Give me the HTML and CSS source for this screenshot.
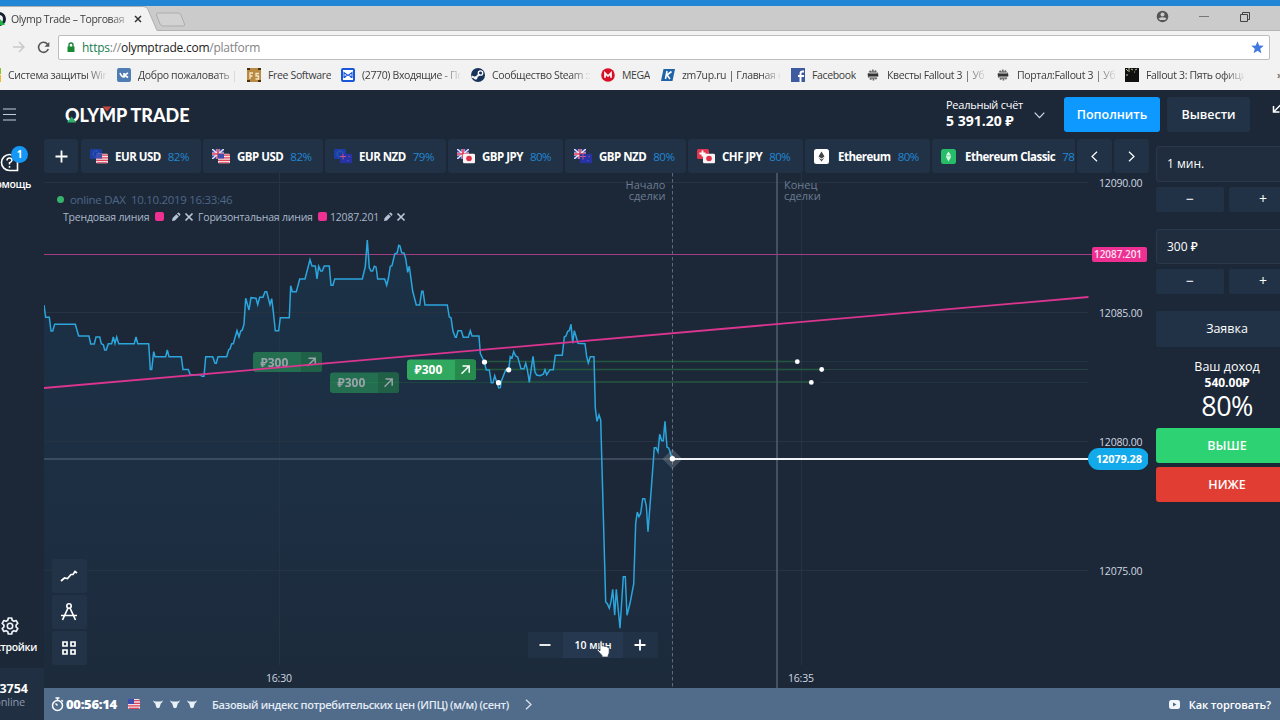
FILE: index.html
```html
<!DOCTYPE html>
<html lang="ru">
<head>
  <meta charset="UTF-8" />
  <meta name="viewport" content="width=device-width, initial-scale=1" />
  <title>Olymp Trade – Торговая платформа</title>
  <link rel="stylesheet" href="styles.css">
</head>
<body>
  <!-- icons used more than once -->
  <svg class="defs">
    <symbol id="eu" viewBox="0 0 12 10"><rect width="12" height="10" rx="1.5" fill="#1c3fa6"/><circle cx="6" cy="5" r="3" fill="none" stroke="#4a78b8" stroke-dasharray="1 1"/></symbol>
    <symbol id="us" viewBox="0 0 12 10"><rect width="12" height="10" rx="1.5" fill="#f3dfe4"/><path d="M0 1.7h12M0 4.3h12M0 6.9h12M1 9.4h10" stroke="#dc4459" stroke-width="1.2"/><path d="M0 0h6v5H0z" fill="#3f4fae"/></symbol>
    <symbol id="gb" viewBox="0 0 12 10"><rect width="12" height="10" rx="1.5" fill="#2c3c9c"/><path d="M0 0l12 10M12 0L0 10" stroke="#e8dfee" stroke-width="1.5"/><path d="M6 0v10M0 5h12" stroke="#f3e6ee" stroke-width="3"/><path d="M6 0v10M0 5h12" stroke="#dd3c5c" stroke-width="1.7"/></symbol>
    <symbol id="nz" viewBox="0 0 12 10"><rect width="12" height="10" rx="1.5" fill="#2732a4"/><path d="M0 3h6M3 0v6" stroke="#c0558c"/><circle cx="9" cy="3" r=".8" fill="#8b4aa0"/><circle cx="8" cy="7" r=".8" fill="#5a4fc0"/></symbol>
    <symbol id="jp" viewBox="0 0 12 10"><rect width="12" height="10" rx="1.5" fill="#fbf4f5"/><circle cx="6" cy="5" r="2.8" fill="#e02f49"/></symbol>
    <symbol id="ch" viewBox="0 0 12 10"><rect width="12" height="10" rx="1.5" fill="#e0364f"/><path d="M5.500 1.500v6M2.500 4.500h6" stroke="#fff" stroke-width="1.800"/></symbol>
    <symbol id="pen" viewBox="0 0 10 10"><path d="M1 9l.6-3L5.4 2.200l2.400 2.400L4 8.400z M6.100 1.500l.7-.7q.6-.5 1.200 0l1.200 1.200q.5.600 0 1.200l-.7.700z" fill="#b4c3d6"/></symbol>
    <symbol id="cross" viewBox="0 0 10 10"><path d="M1.500 1.500l7 7M8.500 1.500l-7 7" stroke="#b9c6d8" stroke-width="1.700"/></symbol>
    <symbol id="bull" viewBox="0 0 10 10"><path d="M.3 1q.5 1.500 2.500 1.500h4.400Q9.200 2.500 9.700 1q.3 2.800-1.900 3.500L6.600 8.500 5 9.300 3.400 8.500 2.200 4.500Q0 3.800.3 1z" fill="#e9f0f8"/></symbol>
    <symbol id="gearmark" viewBox="0 0 14 14"><circle cx="7" cy="7" r="4.800" fill="#777"/><circle cx="7" cy="7" r="5.300" fill="none" stroke="#666" stroke-width="2" stroke-dasharray="2 1.300"/><path d="M1 7h12" stroke="#333" stroke-width="2.500"/><path d="M3 4.500h8M3 9.500h8" stroke="#bbb"/></symbol>
  </svg>

  <div class="browser">
    <div class="tabstrip">
      <div class="tab">
        <svg class="tab-shape" width="162" height="25"><path d="M0 .5H143q4 0 5 3L157 24.500H162V25H0z" fill="#f2f2f2"/><path d="M0 .5H143q4 0 5 3L157 24.500H162" fill="none" stroke="#aeaeae"/></svg>
        <svg class="favicon" width="10" height="16"><circle cx="-1" cy="8" r="5.500" fill="none" stroke="#14202e" stroke-width="3"/><path d="M-6 14L0 8l5 6z" fill="#1eb445"/></svg>
        <span class="tab-title">Olymp Trade – Торговая</span>
        <svg class="tab-close" width="8" height="8"><path d="M1 1l6 6M7 1L1 7" stroke="#333" stroke-width="1.500"/></svg>
      </div>
      <svg class="newtab" width="32" height="16"><path d="M3 1H23q2 0 3 2l3.500 9q1 2-1.500 2H8q-2 0-3-2L1.500 3Q1 1 3 1z" fill="#d2d2d2" stroke="#adadad"/></svg>
      <div class="winbuttons">
        <svg width="13" height="13" viewBox="0 0 13 13"><circle cx="6.500" cy="6.500" r="5.800" fill="#555"/><circle cx="6.500" cy="4.500" r="2" fill="#ccc"/><path d="M2.500 8.500q4-2.500 8 0l-1.500 1.500h-5z" fill="#ccc"/></svg>
        <svg width="10" height="13"><path d="M0 6.500h10" stroke="#777"/></svg>
        <svg width="11" height="13"><path d="M1.500 4.500h7v7h-7zM3.500 4V2.500h7v7H9" fill="none" stroke="#444"/></svg>
      </div>
    </div>
    <div class="addressbar">
      <svg width="12" height="12"><path d="M0 6h11M6 1l5 5-5 5" fill="none" stroke="#c9c9c9" stroke-width="1.500"/></svg>
      <svg class="reload" width="13" height="13"><path d="M10.500 3.200A5 5 0 1 0 11.300 8" fill="none" stroke="#555" stroke-width="1.600"/><path d="M12.300 1v4.800H7.500z" fill="#555"/></svg>
      <div class="omnibox">
        <svg width="8" height="11"><path d="M2 5V3q0-2 2-2t2 2v2" fill="none" stroke="#188038" stroke-width="1.400"/><path d="M.5 4.500h7V10h-7z" fill="#188a32"/></svg>
        <span class="url"><i>https</i><s>://</s>olymptrade.com<s>/platform</s></span>
        <svg class="star" width="13" height="13" viewBox="0 0 13 13"><path d="M6.500 .3l1.700 4.200 4.500.3-3.500 2.900 1.200 4.500-3.900-2.500-3.900 2.500 1.200-4.500L.3 4.800l4.500-.3z" fill="#3f78e0"/></svg>
      </div>
    </div>
    <div class="bookmarks">
      <div class="bm bm1"><svg width="14" height="14"><path d="M0 0h6v6H0zM8 0h6v6H8z" fill="#8cc21e"/><path d="M0 7h14v7H0z" fill="#f5b91c"/></svg><span class="fade">Система защиты Wind</span></div>
      <div class="bm bm2"><svg width="14" height="14"><rect width="14" height="14" rx="2" fill="#4f7db3"/><path d="M3 5q1.500 4 4 4V5M11 5L7.500 7 11 9.500" fill="none" stroke="#fff" stroke-width="1.600"/></svg><span class="fade">Добро пожаловать |</span></div>
      <div class="bm bm3"><svg width="14" height="14"><rect width="14" height="14" fill="#b98a44"/><path d="M3 11V5h3M3 8h2.500M12 5.500H9V8h2.500v3H8.500" fill="none" stroke="#f5e6c4" stroke-width="1.300"/><path d="M0 0h3v2H0zM11 0h3v2h-3zM0 12h3v2H0zM11 12h3v2h-3z" fill="#47330f"/></svg><span>Free Software</span></div>
      <div class="bm bm4"><svg width="14" height="14"><rect x="1" y="1" width="12" height="12" rx="1" fill="#fff" stroke="#1a56d8" stroke-width="2"/><path d="M3 10V4.500l4 3 4-3V10M3.500 9.500L5.500 7.500M10.500 9.500L8.500 7.500" fill="none" stroke="#1a56d8" stroke-width="1.100"/></svg><span class="fade">(2770) Входящие - Поч</span></div>
      <div class="bm bm5"><svg width="14" height="14"><circle cx="7" cy="7" r="7" fill="#16335c"/><path d="M.5 8.500l4 1.500 4-4" fill="none" stroke="#eee" stroke-width="2"/><circle cx="9.500" cy="5" r="2.200" fill="none" stroke="#fff" stroke-width="1.300"/><circle cx="4.800" cy="10" r="1.600" fill="#fff"/></svg><span class="fade">Сообщество Steam ::</span></div>
      <div class="bm bm6"><svg width="14" height="14"><circle cx="7" cy="7" r="6.800" fill="#d90f26"/><path d="M4 9.800V5l3 3 3-3v4.800" fill="none" stroke="#fff" stroke-width="1.700"/></svg><span>MEGA</span></div>
      <div class="bm bm7"><svg width="14" height="14"><path d="M2.500 1H14l-2.500 12H0z" fill="#1e62a8"/><path d="M6 3L4.500 11M10.500 3.500L6 7l3 4" fill="none" stroke="#fff" stroke-width="1.600"/></svg><span class="fade">zm7up.ru | Главная ст</span></div>
      <div class="bm bm8"><svg width="14" height="14"><rect width="14" height="14" fill="#3f5ba0"/><path d="M9.500 14V5.500q0-2 2-2H13M7 8h6" fill="none" stroke="#fff" stroke-width="1.900"/></svg><span>Facebook</span></div>
      <div class="bm bm9"><svg width="12" height="12"><use href="#gearmark"/></svg><span class="fade">Квесты Fallout 3 | Убеж</span></div>
      <div class="bm bm10"><svg width="12" height="12"><use href="#gearmark"/></svg><span class="fade">Портал:Fallout 3 | Убеж</span></div>
      <div class="bm bm11"><svg width="14" height="14"><path d="M0 0h14v14H0z" fill="#111"/><path d="M1 1l2 2M4 0v4M2 6v2M6 1l2 1M10 2l2-1M9 4h1" stroke="#bfc3a0"/></svg><span class="fade">Fallout 3: Пять официал</span></div>
      <span class="more">»</span>
    </div>
  </div>

  <div class="app">
    <div class="sidebar">
      <svg class="burger" width="14" height="13"><path d="M0 1h13M0 6.500h13M0 12h13" stroke="#c3ccd8" stroke-width="1.200"/></svg>
      <div class="help">
        <svg width="20" height="20"><path d="M9.500 1.500a8 8 0 1 0 0 16H17.500V9.500a8 8 0 0 0-8-8z" fill="none" stroke="#fff" stroke-width="1.600"/><path d="M7 7.500q0-2.500 2.500-2.500T12 7.300q0 1.500-2.500 2.500v1.700M9.500 13v1.700" fill="none" stroke="#fff" stroke-width="1.500"/></svg>
        <span class="badge">1</span>
      </div>
      <span class="side-label help-label">Помощь</span>
      <svg class="gear" width="18" height="18" viewBox="0 0 18 18"><path d="M7.300 1h3.400l.5 2.300 1.700 1 2.200-.8 1.700 2.900L15.100 8v2l1.700 1.600-1.700 2.900-2.200-.8-1.700 1-.5 2.300H7.300l-.5-2.300-1.700-1-2.200.8-1.700-2.900L2.900 10V8L1.200 6.400l1.700-2.900 2.200.8 1.700-1z" fill="none" stroke="#eef2f7" stroke-width="1.700" stroke-linejoin="round"/><circle cx="9" cy="9" r="2.700" fill="none" stroke="#eef2f7" stroke-width="1.600"/></svg>
      <span class="side-label">Настройки</span>
      <div class="online"><b>13754</b><span>online</span></div>
    </div>

    <div class="main">
      <div class="header">
        <svg class="logo" width="128" height="20">
          <text x="0" y="16.500" textLength="124.500" lengthAdjust="spacingAndGlyphs">OLYMP TRADE</text>
          <path d="M2 17.500l4.700-6 4.700 6z" fill="#2fae6c"/>
          <path d="M37.500 1.500h9l-4.500 5z" fill="#c8473f"/>
        </svg>
        <div class="account">
          <span>Реальный счёт</span>
          <b>5 391.20 ₽</b>
        </div>
        <svg class="chev" width="11" height="7"><path d="M.7 .7l4.800 5 4.800-5" fill="none" stroke="#d5dce5" stroke-width="1.200"/></svg>
        <button class="deposit">Пополнить</button>
        <button class="withdraw">Вывести</button>
        <svg class="expand" width="14" height="12"><path d="M1.500 4v6h6M2 9.500L10 1.500" fill="none" stroke="#fff" stroke-width="1.500"/></svg>
      </div>

      <div class="workspace">
        <div class="trading">
          <div class="pairs">
            <div class="add"><svg width="13" height="13"><path d="M6.500 .5v12M.5 6.500h12" stroke="#fff" stroke-width="1.800"/></svg></div>
            <div class="pair w120"><svg class="flags"><use href="#eu" width="12" height="10"/><use href="#us" x="6" y="4.500" width="12" height="10"/></svg><b>EUR USD</b><i>82%</i></div>
            <div class="pair w120"><svg class="flags"><use href="#gb" width="12" height="10"/><use href="#us" x="6" y="4.500" width="12" height="10"/></svg><b>GBP USD</b><i>82%</i></div>
            <div class="pair w121"><svg class="flags"><use href="#eu" width="12" height="10"/><use href="#nz" x="6" y="4.500" width="12" height="10"/></svg><b>EUR NZD</b><i>79%</i></div>
            <div class="pair w115"><svg class="flags"><use href="#gb" width="12" height="10"/><use href="#jp" x="6" y="4.500" width="12" height="10"/></svg><b>GBP JPY</b><i>80%</i></div>
            <div class="pair w121"><svg class="flags"><use href="#gb" width="12" height="10"/><use href="#nz" x="6" y="4.500" width="12" height="10"/></svg><b>GBP NZD</b><i>80%</i></div>
            <div class="pair w115"><svg class="flags"><use href="#ch" width="12" height="10"/><use href="#jp" x="6" y="4.500" width="12" height="10"/></svg><b>CHF JPY</b><i>80%</i></div>
            <div class="pair w125"><svg class="coin" width="15" height="15"><rect width="15" height="15" rx="2.500" fill="#fff"/><path d="M7.500 2.500l3 5-3 2-3-2zM4.700 8.800l2.800 1.700 2.800-1.700-2.800 3.700z" fill="#444"/></svg><b>Ethereum</b><i>80%</i></div>
            <div class="pair last"><svg class="coin" width="15" height="15"><rect width="15" height="15" rx="2.500" fill="#27bd68"/><path d="M7.500 2.500L10 6.500H5zM5 8h5l-2.500 4.500z" fill="#d8f7e4"/><path d="M5 7.300h5" stroke="#d8f7e4"/></svg><b>Ethereum Classic</b><i>78%</i></div>
            <div class="arrow"><svg width="7" height="11"><path d="M6 .7L1 5.500l5 4.800" fill="none" stroke="#fff" stroke-width="1.200"/></svg></div>
            <div class="arrow"><svg width="7" height="11"><path d="M1 .7l5 4.800-5 4.800" fill="none" stroke="#fff" stroke-width="1.200"/></svg></div>
          </div>

          <div class="chart">
            <!-- viewBox keeps window coordinates -->
            <svg class="plot" viewBox="44 173 1104 515" width="1104" height="515">
              <defs>
                <linearGradient id="area" x1="0" y1="240" x2="0" y2="688" gradientUnits="userSpaceOnUse">
                  <stop offset="0" stop-color="#1b3146"/>
                  <stop offset=".65" stop-color="#1d2e42"/>
                  <stop offset="1" stop-color="#1c2a3a"/>
                </linearGradient>
                <path id="price" d="M44 305L45.700 317.300H49.300L51 331H52.700L54.700 324.300H75.300L78.700 336H89L90.700 344H94.300L96 337H99.700L101.300 343.700 103.300 344.700 104.700 350H106.300L108.300 343.700H111.700L113.300 337 115 343.500 116.700 337 118.700 343.700H134.300L136 337 137.700 343.700H148.700L150.300 369.500H151.700L153.700 351.700 155 356.700H165.700L167.300 350 169 356.700H181.300L183 369.500H188.300L190.300 374.700H200L202 376.300H204L205.700 356.700H212.700L215 363.300H216.300L218 356.700H226.700L228.700 349.700 230 349 231.700 343.700H233.300L237 330.700 239 337 240.700 331 242.300 330 244 324.300 245.700 298.300 249 310 251 297.700 256 298.300 257.700 304.700 259.700 297.300H263L265 291.700H266.700L270 304.700 271.700 298.700 273.300 311.700 275.300 330.700H278.700L280.300 317.700H289.300L290.700 285.700 292.300 291.700H296.300L299.700 279H305L310 259.700 312 266H315.300L317 279 318.700 266.300 320.700 271H322.300L324.300 266H329.300L331 285.300H333L334.700 279H362.300L365.300 266.700 367.300 240 369.300 267.700 371 271H372.700L374.300 266.300 376 267 377.700 279H384.700L386.700 285.300 388.300 279 390.300 266.300 392 265.700 394.700 254 397.300 252.700 398.700 245.300 400 246 401.700 252.700 404 253 405.700 258.700 407.700 272.300 409.300 266.300 412.700 291.300 416.300 305H419.700L421.700 291.300H423L425 305H447.300L449.300 317 451 317.700 453 331.300 455.300 337.300H456.300L458 330.700H461.300L463.300 337.300H468.300L470.300 330.700 472 336H479L480.300 353.300 484.300 362 486.300 370H489.300L491.300 382.700H493L494.700 375.700 498.700 388 500.300 387.700 501.300 381.300 503.700 375 505.700 370 508.700 369.700 510.300 356.700 512 358 513.700 351.700 515.700 356 517.700 357 521 368.700H524L525.700 363.300 527.300 369.300 529.300 382.300 533 356.300 535 372 536.700 375 540 375.700 543.300 374.300 545 369.700 546.700 374.700 550 369.700H553.300L555.300 355.300H562.300L564.300 337 566 336 567.700 331.300 569.300 330.700 571 324.300 572.700 343.300 574.300 330.700 576 336.300 578 343.300 585 343.700 586.700 356.700 588.300 363 590.300 356.700H594L595.300 408 597 421.300 599 415 600.700 420 605.700 602 607.300 603.700 609.300 608.300 611 601.700 612.700 589.300 614.700 615.300 616.300 589.300 620 628.300 623.300 576.700H625.300L627 615.300 630 603.300 633.700 584 635.700 523.300 637.300 512 639 516.700 640.700 513.300 642.700 498.700H644.700L646.300 506 648 531.700 651.700 483.300 654.300 447.700H656L658 452 659.700 434.300 661.700 440.700H663.300L665 421.300 667 447.300 668.700 448 672.300 458.700"/>
              </defs>
              <path d="M44 305L45.700 317.300H49.300L51 331H52.700L54.700 324.300H75.300L78.700 336H89L90.700 344H148.700L150.300 369.500 153.700 356.700H181.300L183 369.500H188.300L190.300 374.700 204 376.300 205.700 356.700H226.700L244 324.300 245.700 298.300H256L266.700 291.700 273.300 311.700 275.300 330.700H278.700L280.300 317.700H289.300L290.700 285.700 296.300 291.700 299.700 279H305L310 259.700 312 266H329.300L331 285.300 334.700 279H362.300L367.300 240 369.300 267.700 377.700 279H386.700L394.700 254 398.700 245.300 405.700 258.700 416.300 305H447.300L455.300 337.300 479 336 480.300 353.300 491.300 382.700 498.700 388 513.700 351.700 521 368.700 529.300 382.300 533 356.300 540 375.700 553.300 369.300 555.300 355.300H562.300L564.300 337 571 324.300 578 343.300H585L588.300 363 594 356.700 595.300 408 600.700 420 605.700 602 611 601.700 620 628.300 623.300 576.700 627 615.300 633.700 584 635.700 523.300 642.700 498.700 648 531.700 654.300 447.700 659.700 434.300 665 421.300 667 447.300 672.300 458.700V688H44z" fill="url(#area)"/>
              <path class="grid" d="M44 182.500H1088M44 312.500H1088M44 441.500H1088M44 570.500H1088M279.500 173V665M801.500 173V665"/>
              <path d="M820 382.500H1088M800 361.500H1088" stroke="#22343f"/>
              <path d="M822 369.500H1088" stroke="#24443f"/>
              <path d="M330 382.500H498" stroke="#1e4640"/>
              <path d="M484 361.500H797M476 369.500H822M498 382H811" stroke="#23583f" stroke-width="1.400"/>
              <path d="M44 459H672" stroke="#46566a" stroke-width="1.500"/>
              <path d="M672.500 173V688" stroke="#5d6979" stroke-dasharray="3.500 2.500"/>
              <path d="M777 173V688" stroke="#4f5b6d" stroke-width="1.600"/>
              <path d="M44 254.500H1092" stroke="#a33c82" stroke-width="1.200"/>
              <use href="#price" fill="none" stroke="#2ba5dc" stroke-width="1.500"/>
              <g class="deal" opacity=".55"><rect x="253" y="352" width="69" height="20" rx="3" fill="#2aa35a"/><path d="M301 352h18q3 0 3 3v14q0 3-3 3h-18z" fill="#23884b"/><text x="260.500" y="366.500">₽300</text><path d="M307.500 366l7.500-7.500M308.500 358.200h6.700v6.700" /></g>
              <g class="deal" opacity=".55"><rect x="330" y="372.500" width="69" height="20.500" rx="3" fill="#2aa35a"/><path d="M378 372.500h18q3 0 3 3v14.500q0 3-3 3h-18z" fill="#23884b"/><text x="337.500" y="387.300">₽300</text><path d="M384.500 386.800l7.500-7.500M385.500 379h6.700v6.700"/></g>
              <path d="M44 388L1088.500 297" stroke="#db3590" stroke-width="1.800"/>
              <g class="deal"><rect x="407" y="359.500" width="69" height="20.500" rx="3" fill="#30a860"/><path d="M455 359.500h18q3 0 3 3v14.500q0 3-3 3h-18z" fill="#268a4c"/><text x="414.500" y="374.300">₽300</text><path d="M461.500 373.800l7.500-7.500M462.500 366h6.700v6.700"/></g>
              <g fill="#fff"><circle cx="484.500" cy="362" r="2.600"/><circle cx="508.700" cy="369.800" r="2.600"/><circle cx="498.500" cy="382.700" r="2.600"/><circle cx="797.300" cy="361.700" r="2.400"/><circle cx="821.700" cy="369.500" r="2.400"/><circle cx="811.300" cy="382.400" r="2.400"/></g>
              <path d="M662.500 459l10-10 10 10-10 10z" fill="#fff" fill-opacity=".16"/>
              <path d="M672 459H1090" stroke="#f0f3f6" stroke-width="1.800"/>
              <circle cx="672.400" cy="458.800" r="2.700" fill="#fff"/>
              <g class="axis"><text x="1099" y="187" textLength="43.500">12090.00</text><text x="1099" y="316.500" textLength="43.500">12085.00</text><text x="1099" y="445.500" textLength="43.500">12080.00</text><text x="1099" y="574.500" textLength="43.500">12075.00</text></g>
              <g class="time"><text x="266" y="681.500" textLength="26">16:30</text><text x="788" y="681.500" textLength="26">16:35</text></g>
              <g class="marks"><text x="665.500" y="189" text-anchor="end">Начало</text><text x="665.500" y="200" text-anchor="end">сделки</text><text x="784" y="189">Конец</text><text x="784" y="200">сделки</text></g>
              <rect x="1092" y="247" width="55" height="15" rx="2" fill="#ee3092"/><text class="pinktag" x="1094" y="258" textLength="48">12087.201</text>
              <rect x="1088" y="448" width="61" height="22" rx="11" fill="#12aaeb"/><text class="bluetag" x="1096" y="463" textLength="46">12079.28</text>
            </svg>

            <div class="legend">
              <div class="quote"><span class="dot"></span>online DAX&nbsp; 10.10.2019 16:33:46</div>
              <div class="lines">
                <span class="l1">Трендовая линия</span><em></em><svg width="10" height="10"><use href="#pen"/></svg><svg class="x" width="10" height="10"><use href="#cross"/></svg>
                <span class="l2">Горизонтальная линия</span><em></em><span class="l3">12087.201</span><svg width="10" height="10"><use href="#pen"/></svg><svg class="x" width="10" height="10"><use href="#cross"/></svg>
              </div>
            </div>

            <div class="tools">
              <div><svg width="18" height="14"><path d="M1 12l3.500-3 3 .5L11 5.500h2l2-3 2 1.500" fill="none" stroke="#fff" stroke-width="1.700"/></svg></div>
              <div><svg width="18" height="20"><circle cx="9" cy="4" r="2.200" fill="none" stroke="#fff" stroke-width="1.600"/><path d="M8 6L2.500 18M10 6l5.500 12M1 13.500h16" fill="none" stroke="#fff" stroke-width="1.700"/></svg></div>
              <div><svg width="16" height="16"><path d="M2 2h4v4H2zM10 2h4v4h-4zM2 10h4v4H2zM10 10h4v4h-4z" fill="none" stroke="#fff" stroke-width="1.700"/></svg></div>
            </div>

            <div class="zoombar">
              <div class="zb"><svg width="12" height="12"><path d="M.5 6h11" stroke="#fff" stroke-width="1.800"/></svg></div>
              <div class="period">10 мин</div>
              <div class="zb"><svg width="12" height="12"><path d="M.5 6h11M6 .5v11" stroke="#fff" stroke-width="1.800"/></svg></div>
            </div>
            <svg class="cursor" width="15" height="18" viewBox="0 0 15 18"><path d="M4 11V2q0-1.200 1.100-1.200T6.200 2v4q2-.8 2.500.5 2-.6 2.400.6 2.100-.3 2.100 1.500V12q0 2-1 3v2H6v-1.500L1.500 10.500q-.6-1.400.5-1.600z" fill="#fff" stroke="#26303c" stroke-width=".7"/></svg>
          </div>
        </div>

        <div class="panel">
          <div class="field">1 мин.</div>
          <div class="steps"><div>−</div><div>+</div></div>
          <div class="field second">300 ₽</div>
          <div class="steps"><div>−</div><div>+</div></div>
          <div class="order">Заявка</div>
          <div class="income"><span>Ваш доход</span><b>540.00₽</b><strong>80%</strong></div>
          <div class="trade up">ВЫШЕ</div>
          <div class="trade down">НИЖЕ</div>
        </div>
      </div>

      <div class="footer">
        <svg width="13" height="15"><circle cx="6.500" cy="8.500" r="5" fill="none" stroke="#fff" stroke-width="1.500"/><path d="M4.500 1h4M6.500 1v2.500M10.500 3l1.500 1.500M6.500 8.500L4.500 6.500" stroke="#fff" stroke-width="1.400"/></svg>
        <b class="clock">00:56:14</b>
        <svg class="usflag" width="12" height="10"><use href="#us"/></svg>
        <div class="bulls"><svg width="10" height="10"><use href="#bull"/></svg><svg width="10" height="10"><use href="#bull"/></svg><svg width="10" height="10"><use href="#bull"/></svg></div>
        <span class="news">Базовый индекс потребительских цен (ИПЦ) (м/м) (сент)</span>
        <svg width="7" height="11"><path d="M1 .7l5 4.800-5 4.800" fill="none" stroke="#dfe7f0" stroke-width="1.200"/></svg>
        <div class="howto"><svg width="11" height="9"><rect width="11" height="9" rx="2.500" fill="#f2f6fa"/><path d="M4 2.500l3.500 2L4 6.500z" fill="#4f6a8a"/></svg>Как торговать?</div>
      </div>
    </div>
  </div>
</body>
</html>
```
FILE: styles.css
```css
* { box-sizing: border-box; }
body { margin: 0; width: 1280px; height: 720px; overflow: hidden; background: #1c2838; font-family: "Open Sans", "Noto Sans", sans-serif; color: #fff; }
svg { flex: none; display: block; }
i, em, s { font-style: normal; text-decoration: none; }
.defs { position: absolute; width: 0; height: 0; }

/* browser window */
.browser { height: 90px; border-top: 6px solid #2186d5; background: #f2f2f2; color: #3c3c3c; overflow: hidden; }
.tabstrip { display: flex; height: 25px; background: #cbcbcb; border-bottom: 1px solid #b4b4b4; }
.tab { position: relative; width: 157px; height: 25px; display: flex; align-items: center; }
.tab-shape { position: absolute; left: 0; top: 0; }
.favicon { position: relative; margin-right: 1px; }
.tab-title { position: relative; width: 115px; font-size: 10.5px; letter-spacing: -0.35px; white-space: nowrap; overflow: hidden; -webkit-mask-image: linear-gradient(90deg, #000 86%, rgba(0,0,0,.3)); }
.tab-close { position: relative; margin-left: 8px; }
.newtab { margin: 6px 0 0 -2px; }
.winbuttons { display: flex; align-items: center; gap: 30px; margin: 0 30px 3px auto; }
.addressbar { display: flex; align-items: center; height: 31px; padding: 1px 10px 0 13px; }
.reload { margin: 0 8px 0 12px; }
.omnibox { flex: 1; display: flex; align-items: center; height: 25px; padding: 0 5px 0 8px; background: #fff; border: 1px solid #bdbdbd; border-radius: 2px; }
.url { margin-left: 7px; font-size: 12px; letter-spacing: -0.25px; color: #222; }
.url i { color: #178050; }
.url s { color: #838383; }
.star { margin-left: auto; }
.bookmarks { display: flex; align-items: center; height: 25px; font-size: 10.5px; letter-spacing: -0.35px; white-space: nowrap; overflow: hidden; }
.bm { flex: none; display: flex; align-items: center; gap: 7px; }
.bm span { overflow: hidden; }
.bm .fade { width: 98px; -webkit-mask-image: linear-gradient(90deg, #000 80%, rgba(0,0,0,.1)); }
.bm1 { width: 130px; margin-left: -13px; }
.bm2 { width: 130px; }
.bm3 { width: 94px; }
.bm4, .bm5, .bm7 { width: 130px; }
.bm6 { width: 60px; }
.bm8 { width: 76px; }
.bm9 { width: 130px; gap: 8px; }
.bm10 { width: 128px; gap: 8px; }
.bm11 { width: 152px; }

/* left column */
.app { display: flex; height: 630px; }
.sidebar { width: 44px; display: flex; flex-direction: column; overflow: hidden; }
.burger { margin: 18px 0 0 3px; }
.help { position: relative; height: 20px; margin-top: 32px; }
.badge { position: absolute; left: 11px; top: -7px; width: 17px; height: 17px; border-radius: 50%; background: #1597f5; font-size: 10px; line-height: 17px; font-weight: 700; text-align: center; }
.side-label { align-self: flex-end; margin-right: 7px; font-size: 10.5px; line-height: 15px; letter-spacing: -0.35px; font-weight: 600; white-space: nowrap; }
.help-label { margin: 4px 13px 0 0; }
.gear { margin: 425px 0 5px 1px; }
.online { height: 52px; margin-top: auto; padding: 13px 16px 0 0; background: #202f41; display: flex; flex-direction: column; align-items: flex-end; }
.online b { font-size: 12.5px; line-height: 15px; }
.online span { margin-right: 3px; font-size: 11px; line-height: 12px; letter-spacing: -0.2px; color: #8999ae; }

/* top bar */
.main { flex: 1; min-width: 0; display: flex; flex-direction: column; }
.header { display: flex; align-items: flex-start; height: 49px; overflow: hidden; }
.header > * { flex: none; }
.logo { margin: 15px 0 0 21px; }
.logo text { font: 900 18px Lato, sans-serif; fill: #fff; }
.account { width: 88px; margin: 8px 0 0 753px; display: flex; flex-direction: column; white-space: nowrap; }
.account span { font-size: 11px; line-height: 14px; letter-spacing: -0.25px; }
.account b { font-size: 14px; line-height: 18px; }
.chev { margin-top: 22px; }
button { height: 35px; margin: 7px 0 0; padding: 0; border: none; border-radius: 3px; background: #233347; color: #fff; font: 600 12.5px "Open Sans", sans-serif; }
.deposit { width: 96px; margin-left: 19px; background: #0d99ff; }
.withdraw { width: 83px; margin-left: 7px; }
.expand { margin: 12px 0 0 22px; }

.workspace { display: flex; height: 549px; }
.trading { width: 1104px; flex: none; }
.pairs { display: flex; gap: 2px; height: 34px; }
.add, .arrow, .pair { background: #223246; border-radius: 3px; flex: none; display: flex; align-items: center; }
.add { width: 34px; margin-right: 1px; justify-content: center; }
.arrow { width: 35px; justify-content: center; }
.pair { padding-left: 9px; font-size: 11.5px; letter-spacing: -0.5px; white-space: nowrap; overflow: hidden; }
.pair b { margin: 0 7px; }
.pair i { color: #2087d2; }
.flags { width: 18px; height: 15px; }
.coin { margin-right: 2px; }
.w120 { width: 120px; }
.w121 { width: 121px; }
.w115 { width: 115px; }
.w125 { width: 125px; }
.last { width: 143px; border-radius: 3px 0 0 3px; }

/* chart */
.chart { position: relative; height: 515px; }
.grid { stroke: #253343; fill: none; }
.axis text, .time text { font-size: 10.5px; fill: #d0d7e0; }
.marks text { font-size: 11px; fill: #6d7c91; }
.pinktag { font-size: 10px; font-weight: 600; fill: #ffe3f2; }
.bluetag { font-size: 11px; font-weight: 700; fill: #fff; }
.deal text { font-size: 12px; font-weight: 700; fill: #fff; }
.deal path:last-child { fill: none; stroke: #fff; stroke-width: 1.5; }
.legend { position: absolute; left: 13px; top: 18px; }
.quote { display: flex; align-items: center; height: 17px; font-size: 11.5px; letter-spacing: -0.3px; color: #4d6788; white-space: nowrap; }
.dot { width: 7px; height: 7px; margin-right: 6px; border-radius: 50%; background: #37b26c; }
.lines { display: flex; align-items: center; height: 17px; margin-left: 6px; font-size: 10.5px; letter-spacing: -0.2px; color: #a9b7c9; white-space: nowrap; }
.lines em { width: 9px; height: 9px; border-radius: 2px; background: #ee3092; }
.lines em + svg { margin-left: 7px; }
.l1 { width: 92px; }
.l2 { width: 120px; }
.l3 { width: 53px; margin-left: 3px; }
.x { margin: 0 4px 0 3px; }
.tools { position: absolute; left: 8px; top: 386px; display: flex; flex-direction: column; gap: 2px; }
.tools div { width: 35px; height: 34px; padding-right: 1px; border-radius: 2px; background: #223247; display: flex; align-items: center; justify-content: center; }
.zoombar { position: absolute; left: 484px; top: 459px; display: flex; height: 26px; }
.zb { width: 35px; padding-right: 1px; background: #213146; display: flex; align-items: center; justify-content: center; }
.period { width: 60px; background: #26384f; font-size: 10.5px; line-height: 26px; font-weight: 600; text-align: center; }
.cursor { position: absolute; left: 552px; top: 467px; }

/* deal panel, cut by the window edge */
.panel { width: 142px; margin: 7px 0 0 8px; flex: none; }
.field { height: 36px; padding-left: 10px; background: #1f2d3e; border: 1px solid #29394d; border-radius: 3px; font-size: 12px; line-height: 34px; font-weight: 500; }
.second { margin-top: 17px; height: 35px; }
.steps { display: flex; gap: 5px; height: 25px; margin-top: 5px; }
.steps div { width: 68px; background: #223246; border-radius: 2px; font-size: 14px; line-height: 24px; text-align: center; }
.order { height: 36px; margin-top: 17px; background: #223246; border-radius: 2px; font-size: 12.5px; line-height: 36px; font-weight: 500; text-align: center; }
.income { height: 81px; padding-top: 11px; display: flex; flex-direction: column; align-items: center; }
.income span { font-size: 12.5px; line-height: 17px; }
.income b { font-size: 12px; line-height: 15px; }
.income strong { font-size: 27px; line-height: 32px; font-weight: 400; letter-spacing: -0.6px; }
.trade { height: 35px; border-radius: 3px; font-size: 12.5px; line-height: 35px; font-weight: 600; text-align: center; }
.up { background: #2dd272; margin-bottom: 4px; }
.down { background: #e23d33; }

.footer { display: flex; align-items: center; height: 32px; padding: 0 9px 0 7px; background: #516c8b; font-size: 11px; letter-spacing: -0.1px; font-weight: 600; }
.clock { width: 56px; margin-left: 2px; font-size: 13px; letter-spacing: -0.3px; }
.usflag { margin: 0 13px 0 6px; }
.bulls { display: flex; gap: 7px; width: 59px; }
.news { width: 313px; letter-spacing: -0.35px; color: #e3ebf4; white-space: nowrap; }
.howto { margin-left: auto; display: flex; align-items: center; gap: 9px; }
```
